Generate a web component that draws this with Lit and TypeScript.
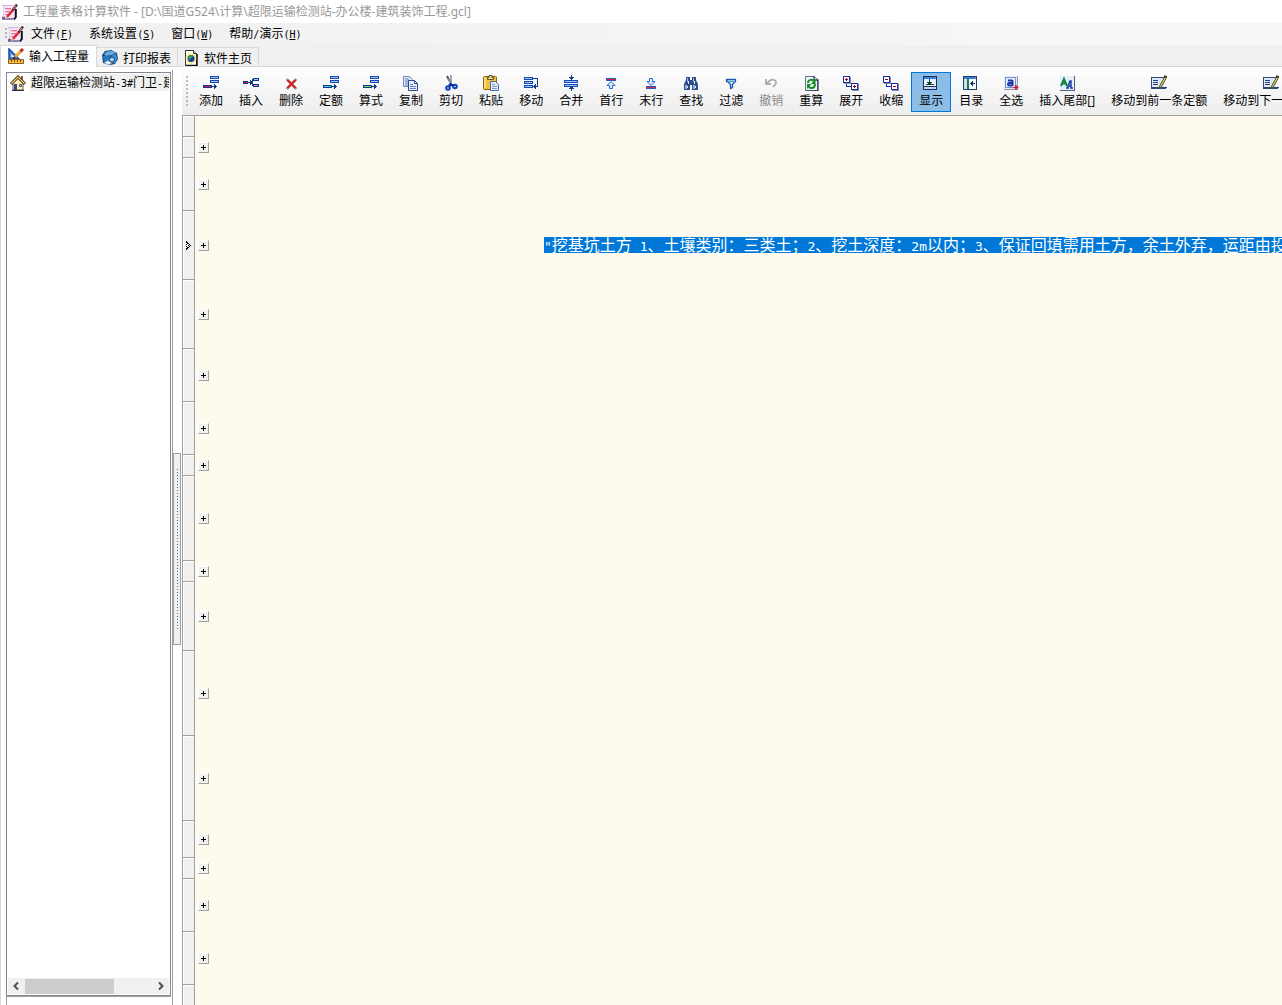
import { LitElement, html, svg, css, nothing } from "lit";
import { customElement, property } from "lit/decorators.js";
import { classMap } from "lit/directives/class-map.js";
import { styleMap } from "lit/directives/style-map.js";

const bars = svg`<path fill="#1747b4" d="M7 1h9v3H7zM7 5h9v3H7z"/><path fill="#9cc8f8" d="M8 2h7v1H8zM8 6h7v1H8z"/>`;
const addArrow = (fill: string) => svg`${bars}
  <path fill="#123a8c" d="M0 10h9v3H0zM9 11h3v1H9zM11 9h1v1h1v1h1v1h-1v1h-1v1h-1z"/><path fill=${fill} d="M1 11h7v1H1z"/>`;
const nodeBox = (x: number, y: number, plus: boolean) => svg`
  <path fill="#8a8aa0" d="M${x + 1} ${y + 1}h7v7h-7z"/><path fill="#1830a0" d="M${x} ${y}h7v7h-7z"/>
  <path fill="#fff" d="M${x + 1} ${y + 1}h5v5h-5z"/><path fill="#a00020" d="M${x + 2} ${y + 3}h3v1h-3z"/>
  ${plus ? svg`<path fill="#a00020" d="M${x + 3} ${y + 2}h1v3h-1z"/>` : nothing}`;
const nodes = (plus: boolean) => svg`<path fill="#1830a0" d="M3 7h1v4h5v1H3z"/>${nodeBox(0, 1, plus)}${nodeBox(8, 8, plus)}`;

const glyphs: Record<string, unknown> = {
  add: addArrow("#e0103c"),
  quota: addArrow("#30e0d8"),
  formula: addArrow("#80e030"),
  insert: svg`<path fill="#123a8c" d="M0 6h5v3H0zM5 7h4v1H5zM7 5h1v1h1v3H8v1H7zM9 4h1v7H9zM10 3h6v3h-6zM10 9h6v3h-6z"/>
    <path fill="#e0103c" d="M1 7h4v1H1z"/><path fill="#9cc8f8" d="M11 4h4v1h-4z"/><path fill="#e080a8" d="M11 10h4v1h-4z"/>`,
  remove: svg`<path d="M3.500 4l10 10M13.500 4l-10 10" stroke="#a0a0a0" stroke-width="2.500"/><path d="M4.500 5l8 8M12.500 5l-8 8" stroke="#d82020" stroke-width="2"/>`,
  copy: svg`<path d="M.5 1.500h6l3 3v7h-9z" fill="#dce8fc" stroke="#7488b8"/><path d="M2 4h4M2 6h5M2 8h4M2 10h4" stroke="#6480c0"/>
    <path d="M5.500 5.500h6l3 3v7h-9z" fill="#e8f0ff" stroke="#2c4690"/><path d="M11.500 5.500v3h3" fill="none" stroke="#2c4690"/><path d="M7 9.500h3M7 11.500h6M7 13.500h6" stroke="#6480c0"/>`,
  cut: svg`<path d="M4 1l5 10" stroke="#4c5868" stroke-width="2"/><path d="M8 0v10" stroke="#8490a0" stroke-width="1.500"/><path d="M5 4l4 7" stroke="#d0d8e0" stroke-width=".7"/>
    <circle cx="5" cy="13" r="1.800" fill="none" stroke="#1040c0" stroke-width="2"/><circle cx="12" cy="11.500" r="1.800" fill="none" stroke="#1040c0" stroke-width="2"/><path d="M7 9l4 2M8 9l-2 2" stroke="#1030a0" stroke-width="2.500"/>`,
  paste: svg`<rect x=".5" y="1.500" width="13" height="13" rx="1" fill="#f0c040" stroke="#8a6410"/><path d="M2 3v10" stroke="#ffe898" stroke-width="1.500"/>
    <path d="M4.500 4.500v-2h1.500v-2h3v2h1.500v2z" fill="#e8d8a0" stroke="#66501c"/><path d="M7.500 6.500h5l3 3v6h-8z" fill="#e4eefc" stroke="#4c68a8"/><path d="M9 9.500h3M9 11.500h5M9 13.500h5" stroke="#7c98d0"/>`,
  move: svg`<path fill="#1747b4" d="M1 2h9v3H1zM1 6h9v3H1zM1 10h9v3H1z"/><path fill="#9cc8f8" d="M2 3h7v1H2zM2 7h7v1H2zM2 11h7v1H2z"/>
    <path fill="#123a8c" d="M10 3h5v9h-2v2h-1v-1h-1v-1h-1v-1h1v-1h1V9h1v2h1V4h-4z"/>`,
  merge: svg`<path fill="#1747b4" d="M1 5h14v3H1zM1 9h14v3H1z"/><path fill="#9cc8f8" d="M2 6h12v1H2zM2 10h12v1H2z"/>
    <path fill="#123a8c" d="M8 0h1v2h2v1h-1v1H9v1H8V4H7V3H6V2h2zM8 16h1v-2h2v-1h-1v-1H7v1H6v1h2z"/>`,
  first: svg`<path fill="#2858c0" d="M3 3h10v3H3z"/><path fill="#e02030" d="M4 4h8v1H4z"/><path d="M8 6.500l4 4H9.500v3h-3v-3H4z" fill="#d8ecff" stroke="#2868d0"/>`,
  last: svg`<path fill="#2858c0" d="M3 11h10v3H3z"/><path fill="#e02030" d="M4 12h8v1H4z"/><path d="M8 10.500l4-4H9.500v-3h-3v3H4z" fill="#d8ecff" stroke="#2868d0"/>`,
  find: svg`<path fill="#2c4c88" d="M3 2h4v3h2V2h4v3l2 4v6H9v-5H7v5H1V9l2-4z"/><path fill="#90b4e0" d="M4 3h1v4H4zM10 3h1v4h-1zM2 10h2v4H2zM10 10h2v4h-2z"/><path fill="#d8e8f8" d="M5 6h1v3H5zM11 6h1v3h-1zM4 11h1v2H4zM12 11h1v2h-1z"/>`,
  filter: svg`<path d="M3.500 4.500h9v2l-3 3v3l-2 1v-4l-3-3h-1z" fill="#c0e4fa" stroke="#2058b0" stroke-width="1.300"/><path d="M5 6.500h6" stroke="#50a8b8"/>`,
  undo: svg`<path d="M3 4v5h5M3.500 8.500L7 5.500c2-1.500 6-1 6 2 0 2-1 3-3 4.500" fill="none" stroke="#acacac" stroke-width="1.800"/>`,
  recalc: svg`<path d="M2.500 1.500h9l3 3v11h-12z" fill="#f0f4fa" stroke="#687488"/><path d="M11 1v4h4v11H3" fill="none" stroke="#34405c" stroke-width="1.300"/>
    <path d="M5 8c0-4 5-4 6-1M12 9c0 5-5 5-7 2" fill="none" stroke="#109020" stroke-width="2"/><path fill="#109020" d="M12.500 4v5H8zM4 14V9h4.500z"/>`,
  expand: nodes(true),
  shrink: nodes(false),
  show: svg`<path fill="#183060" d="M0 1h14v14H0z"/><path fill="#3880e0" d="M1 2h12v2H1z"/><path fill="#ff8030" d="M12 2h1v1h-1z"/><path fill="#e8f4ff" d="M1 4h12v7H1z"/><path fill="#c4d4e8" d="M1 12h12v2H1z"/>
    <path fill="#124030" d="M6 4h1v3h2v1H8v1H7v1H6V9H5V8H4V7h2zM3 9h8v1H3z"/>`,
  catalog: svg`<path fill="#203c70" d="M0 1h14v14H0z"/><path fill="#3880e0" d="M1 2h12v2H1z"/><path fill="#ff8030" d="M12 2h1v1h-1z"/><path fill="#d4e0f0" d="M1 4h3v10H1z"/><path fill="#188040" d="M4 3h2v11H4z"/><path fill="#f4f8ff" d="M6 4h7v10H6z"/><path fill="#123060" d="M7 8h1V7h1V6h1v2h2v1h-2v2H9v-1H8V9H7z"/>`,
  selectAll: svg`<path fill="#8a98b0" d="M1 1h14v14H1z"/><path fill="#e0ecfc" d="M1 1h13v13H1z"/><rect x="2.500" y="2.500" width="10" height="10" fill="none" stroke="#1838a0" stroke-dasharray="1 1"/>
    <path d="M5 5.500h3.500q1 0 1 1v4.500M9 8H6.500q-1.500 0-1.500 1.200T6.500 10.500H9" fill="none" stroke="#1838a0" stroke-width="2"/><path d="M13 10v5M10.500 12.500h5" stroke="#e01020" stroke-width="1.500"/>`,
  tail: svg`<path fill="#506080" d="M1 1h15v15H1z"/><path fill="#e4eef8" d="M1 1h14v14H1z"/><path d="M2 11l3-7 3 7M3.500 8.500h3.500" fill="none" stroke="#108040" stroke-width="2"/><path d="M8.500 13l2.500-7h1v7M9 11h3M7 13h3M11 13h3" fill="none" stroke="#1840a0" stroke-width="1.500"/>`,
  pen: svg`<path fill="#304878" d="M0 2h14v1H1v9h14v2H0z"/><path fill="#dce8f8" d="M1 3h12v9H1z"/><path d="M2 5.500h5M2 7.500h5M2 9.500h5M9 12.500h7" stroke="#284080"/><path d="M14 1.500l-5 9-1 3 2.500-2 5-9z" fill="#ffe840" stroke="#484830"/><path d="M13 1l3 1" stroke="#302020" stroke-width="1.500"/>`,
  app: svg`<path d="M1 1h11l2 3v11H3z" fill="#f2e6f8"/><path d="M0 1.500h10" stroke="#d0b8dc"/><path d="M1.500 2v11" stroke="#e0c8e8"/><path d="M3 4.500h6M3 7.500h5M3 10.500h4" stroke="#f07890"/><path d="M4 5.500h5M4 8.500h4" stroke="#f4b8c8"/>
    <path d="M0 13.500h3M0 15h11" stroke="#7060a0" stroke-width="1.500"/><path d="M13.800 5v8l-2 2.500" fill="none" stroke="#181020" stroke-width="2"/>
    <path d="M5 13l6-7" stroke="#e02838" stroke-width="2.500"/><path d="M10.500 6.500L15 .5" stroke="#602838" stroke-width="2.500"/><path d="M11.500 5L14 2" stroke="#f09898"/><path d="M3.500 14.500L5 13" stroke="#f0b070" stroke-width="2"/>`,
  ruler: svg`<path d="M1 1v10h10z" fill="#4c90e0" stroke="#1c48a8" stroke-width="1.500"/><path d="M3.500 6v3h3z" fill="#fff"/><path d="M7 9l6-6" stroke="#e89820" stroke-width="3"/><path d="M8 7.500l5-5" stroke="#ffd868"/><path d="M12.500 3.500L15 1" stroke="#c82828" stroke-width="3"/><path d="M5.500 10.500L7 9" stroke="#303030" stroke-width="2"/>
    <path d="M.5 11.500h15v4H.5z" fill="#f4c048" stroke="#906010"/><path d="M3.500 12v2M6.500 12v2M9.500 12v2M12.500 12v2" stroke="#704808"/>`,
  printer: svg`<path d="M0 5l3-4 6-1 6 3 1 6-3 5-5 1-7-2z" fill="#184c84"/><path d="M2 4l3-2.500 5-.5 4 2-4 2-6 1z" fill="#68a8dc"/><path d="M1 6l7-.5V12l-6-1z" fill="#2878c0"/><path d="M9 6l5-2 1 5-2 4H9z" fill="#3c90d0"/><circle cx="10" cy="9.500" r="2.500" fill="#a8d4f0" stroke="#103c6c"/><path d="M2 12.500l4-2 4 2.500-4 2z" fill="#e8f0f8" stroke="#6890b8" stroke-width=".6"/>`,
  web: svg`<path d="M2.500.5h8l3 3v12h-11z" fill="#fff" stroke="#303030"/><path d="M3 15.500h11V4" fill="none" stroke="#101010" stroke-width="1.500"/><path d="M10.500.5v3h3" fill="#ddd" stroke="#303030"/><circle cx="8" cy="8.500" r="4.500" fill="none" stroke="#f0e020" stroke-width="2" stroke-dasharray="1 1"/><circle cx="8" cy="8.500" r="3.500" fill="#1838a0"/><path d="M6 6l3-1 1 2-3 2-1 2-1-3z" fill="#30a060"/>`,
  house: svg`<path d="M3 8v7h10V8L8 3z" fill="#fff0b8" stroke="#705830"/><path d="M11 1h2v5h-2z" fill="#a05030"/><path d="M1 9l7-7 7 7" fill="none" stroke="#403020" stroke-width="3"/><path d="M1.500 8.500L8 2l6.500 6.500" fill="none" stroke="#f4d068" stroke-width="1.200"/><path d="M4 9h3v6H4z" fill="#384890"/><path d="M9.500 9.500h2v2h-2z" fill="#90b8f0" stroke="#404880" stroke-width=".8"/><path d="M2 15.500h12" stroke="#302c50"/>`,
  left: svg`<path d="M10 4.500L6.500 8l3.500 3.500" fill="none" stroke="#505050" stroke-width="2"/>`,
  right: svg`<path d="M6 4.500L9.500 8 6 11.500" fill="none" stroke="#505050" stroke-width="2"/>`,
};

@customElement("pixel-icon")
export class PixelIcon extends LitElement {
  @property() name = "";
  static styles = css`
    :host { display: block; flex: none; width: 16px; height: 16px; }
    .art { display: block; }
  `;
  render() {
    return html`<svg class="art" width="16" height="16" viewBox="0 0 16 16" aria-hidden="true">${glyphs[this.name]}</svg>`;
  }
}

const menus = [["文件", "F"], ["系统设置", "S"], ["窗口", "W"], ["帮助/演示", "H"]];
const tabs = [["ruler", "输入工程量"], ["printer", "打印报表"], ["web", "软件主页"]];
const tools = [
  ["add", "添加"], ["insert", "插入"], ["remove", "删除"], ["quota", "定额"], ["formula", "算式"],
  ["copy", "复制"], ["cut", "剪切"], ["paste", "粘贴"], ["move", "移动"], ["merge", "合并"],
  ["first", "首行"], ["last", "末行"], ["find", "查找"], ["filter", "过滤"], ["undo", "撤销"],
  ["recalc", "重算"], ["expand", "展开"], ["shrink", "收缩"], ["show", "显示"], ["catalog", "目录"],
  ["selectAll", "全选"], ["tail", "插入尾部[]"], ["pen", "移动到前一条定额"], ["pen", "移动到下一条定额"],
];
const description = '"挖基坑土方 1、土壤类别：三类土；2、挖土深度：2m以内；3、保证回填需用土方，余土外弃，运距由投';
const rows: { lines: number; text?: string }[] = [
  { lines: 1 }, { lines: 3 }, { lines: 4, text: description }, { lines: 4 }, { lines: 3 }, { lines: 3 },
  { lines: 1 }, { lines: 5 }, { lines: 1 }, { lines: 4 }, { lines: 5 }, { lines: 5 }, { lines: 2 },
  { lines: 1 }, { lines: 3 }, { lines: 3 },
];
const LINE = 16;
const ROW_PADDING = 5;

/** Sets half-width characters in the monospaced face, half as wide as the ideographs. */
const mixed = (text: string) =>
  text.split(/([\x20-\x7e]+)/).map((run) => (/^[\x20-\x7e]/.test(run) ? html`<span class="half">${run}</span>` : run));

@customElement("app-root")
export class AppRoot extends LitElement {
  static styles = css`
    :host {
      display: flex; flex-direction: column; height: 100vh; overflow: hidden;
      background: #fff; color: #000;
      font: 12px/16px "Noto Sans CJK SC", sans-serif;
    }
    * { box-sizing: border-box; }
    button { font: inherit; color: inherit; border: 0; padding: 0; margin: 0; background: none; white-space: nowrap; }
    .half { font-family: "DejaVu Sans Mono", monospace; font-size: 10px; white-space: pre; }
    .title { display: flex; align-items: center; gap: 5px; height: 23px; padding-left: 2px; color: #999; flex: none; }
    .caption { margin: 0; font: 12px/16px "Noto Sans", "Noto Sans CJK SC", sans-serif; white-space: nowrap; }
    .menu { display: flex; align-items: center; height: 22px; padding-left: 5px; background: linear-gradient(90deg, #f0f0f0, #f8f8f8); flex: none; }
    .grip { flex: none; width: 2px; margin-right: 1px; height: 12px; background: repeating-linear-gradient(#b8b8b8 0 2px, transparent 2px 4px); }
    .menu-items { display: flex; gap: 16px; margin-left: 7px; }
    .tabs { display: flex; align-items: flex-end; height: 22px; background: #f0f0f0; border-bottom: 1px solid #d9d9d9; flex: none; }
    .tab { display: flex; align-items: center; gap: 5px; height: 19px; padding: 1px 6px 0 5px; border: 1px solid #d9d9d9; border-left: 0; border-bottom: 0; }
    .tab.active { height: 22px; margin-bottom: -1px; padding: 0 7px 2px; background: #fff; border-left: 1px solid #d9d9d9; }
    .body { display: flex; flex: 1; min-height: 0; padding-top: 3px; border-left: 1px solid #d9d9d9; }
    .side { display: flex; flex-direction: column; width: 172px; padding: 2px 1px 0 5px; border-right: 1px solid #a0a0a0; flex: none; }
    .tree { display: flex; flex-direction: column; flex: 1; border: 1px solid #828790; padding: 1px; min-height: 0; overflow: hidden; }
    .node { display: flex; align-items: center; gap: 4px; padding-left: 2px; height: 17px; overflow: hidden; }
    .node-name { background: #f0f0f0; white-space: nowrap; padding-left: 1px; }
    .scroll { display: flex; align-items: center; height: 16px; margin-top: auto; background: #f0f0f0; }
    .thumb { flex: none; width: 89px; height: 15px; background: #cdcdcd; margin: 0 auto 0 1px; }
    .below { flex: none; height: 9px; border-top: 1px solid #a0a0a0; border-left: 1px solid #a0a0a0; }
    .splitter { display: flex; align-items: center; width: 9px; padding-right: 1px; flex: none; }
    .handle { display: flex; align-items: center; justify-content: center; width: 8px; height: 192px; margin-top: 22px; border: 1px solid #a0a0a0; background: #f0f0f0; padding: 0; }
    .dots { width: 1px; height: 160px; background: repeating-linear-gradient(#2878b8 0 1px, transparent 1px 3px); }
    .main { display: flex; flex-direction: column; flex: 1; min-width: 0; }
    .tools { display: flex; align-items: flex-start; height: 45px; padding: 2px 0 0 4px; overflow: hidden; border-radius: 4px 0 0 0; background: linear-gradient(#fdfdfd, #ededed); flex: none; }
    .tools .grip { height: 30px; margin: 4px 3px 0 0; }
    .tool { display: flex; flex-direction: column; align-items: center; height: 40px; padding: 3px 7px 0; gap: 2px; border: 1px solid transparent; flex: none; font-family: "Open Sans", "Noto Sans CJK SC", sans-serif; }
    .tool pixel-icon { margin-top: -1px; }
    .tool:disabled { color: #8a8a8a; }
    .tool.on { background: #8cbde6; border-color: #0078d7; }
    .sheet { display: flex; flex-direction: column; flex: 1; min-height: 0; overflow: hidden; background: #fffaee; border-top: 1px solid #a0a0a0; border-left: 1px solid #a0a0a0; }
    .row { display: flex; flex: none; height: 21px; }
    .row.rest { flex: 1; }
    .head { display: flex; align-items: center; justify-content: center; width: 12px; background: #f0f0f0; border: 1px solid #a0a0a0; border-width: 0 1px 1px 0; box-shadow: inset 1px 1px #fff; flex: none; }
    .rest .head { border-bottom: 0; }
    .cell { display: flex; align-items: center; flex: 1; min-width: 0; padding: 0 0 1px 3px; overflow: hidden; }
    .plus { display: block; width: 11px; height: 11px; background: #f0f0f0; border: 1px solid; border-color: #fff #a0a0a0 #a0a0a0 #fff; flex: none; }
    .mark { display: block; }
    .text { margin-left: 335px; background: #0078d7; color: #fff; font-size: 16px; line-height: 14px; height: 16px; white-space: nowrap; flex: none; }
    .text .half { font-size: 13px; }
  `;

  render() {
    return html`
      <header class="title">
        <pixel-icon name="app"></pixel-icon>
        <h1 class="caption">工程量表格计算软件 - [D:\\国道G524\\计算\\超限运输检测站-办公楼-建筑装饰工程.gcl]</h1>
      </header>
      <nav class="menu">
        <span class="grip"></span><pixel-icon name="app"></pixel-icon>
        <div class="menu-items">
          ${menus.map(([label, key]) => html`<button>${mixed(label)}<span class="half">(<u>${key}</u>)</span></button>`)}
        </div>
      </nav>
      <div class="tabs" role="tablist">
        ${tabs.map(([icon, label], i) => html`
          <button role="tab" aria-selected=${i === 0} class=${classMap({ tab: true, active: i === 0 })}>
            <pixel-icon name=${icon}></pixel-icon>${label}
          </button>`)}
      </div>
      <div class="body">
        <aside class="side">
          <div class="tree" role="tree">
            <div class="node" role="treeitem">
              <pixel-icon name="house"></pixel-icon><span class="node-name">${mixed("超限运输检测站-3#门卫-建")}</span>
            </div>
            <div class="scroll">
              <button aria-label="向左"><pixel-icon name="left"></pixel-icon></button>
              <span class="thumb"></span>
              <button aria-label="向右"><pixel-icon name="right"></pixel-icon></button>
            </div>
          </div>
          <div class="below"></div>
        </aside>
        <div class="splitter"><button class="handle" aria-label="折叠"><span class="dots"></span></button></div>
        <main class="main">
          <div class="tools" role="toolbar">
            <span class="grip"></span>
            ${tools.map(([icon, label]) => html`
              <button class=${classMap({ tool: true, on: icon === "show" })} ?disabled=${icon === "undo"}>
                <pixel-icon name=${icon}></pixel-icon>${label}
              </button>`)}
          </div>
          <div class="sheet">
            <div class="row"><span class="head"></span></div>
            ${rows.map((row) => html`
              <div class="row" style=${styleMap({ height: `${row.lines * LINE + ROW_PADDING}px` })}>
                <span class="head">${row.text
                  ? html`<svg class="mark" width="5" height="9" viewBox="0 0 5 9"><path d="M0 0h1v1H0zM1 1h1v1H1zM2 2h1v1H2zM3 3h1v1H3zM4 4h1v1H4zM3 5h1v1H3zM2 6h1v1H2zM1 7h1v1H1zM0 8h1v1H0zM0 1h1v1H0zM1 2h1v1H1zM1 6h1v1H1zM0 7h1v1H0zM0 3h1v1H0zM0 5h1v1H0zM2 4h1v1H2z"/></svg>`
                  : nothing}</span>
                <div class="cell">
                  <button class="plus" aria-label="展开"><svg class="mark" width="9" height="9" viewBox="0 0 9 9"><path d="M4 2h1v5H4zM2 4h5v1H2z"/></svg></button>
                  ${row.text ? html`<span class="text">${mixed(row.text)}</span>` : nothing}
                </div>
              </div>`)}
            <div class="row rest"><span class="head"></span></div>
          </div>
        </main>
      </div>
    `;
  }
}
